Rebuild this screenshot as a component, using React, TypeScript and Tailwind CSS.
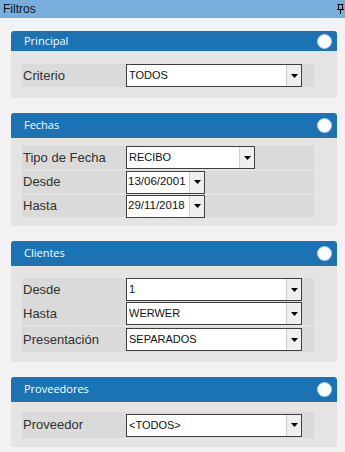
import React from 'react'

const label = "font-['Liberation_Sans',Arial,sans-serif] text-[13px] text-[#303030]"
const value = "font-['Liberation_Sans',Arial,sans-serif] text-[#111]"

function Combo({ text, width, big }: { text: string; width: string; big?: boolean }) {
    return (
        <div className={`flex h-[23px] bg-white border border-[#3f3f3f] ${width}`}>
            <div className={`flex-1 flex items-center overflow-hidden whitespace-nowrap ${value} ${big ? 'text-[11.5px] pl-[1px]' : 'text-[11px] pl-[2px]'}`}>{text}</div>
            <div className="w-[15px] flex items-center justify-center bg-[#efefef] border-l border-[#cfcfcf]">
                <svg width="7" height="4" viewBox="0 0 7 4">
                    <path d="M0 0h7L3.5 4z" fill="#000" />
                </svg>
            </div>
        </div>
    )
}

function Row({ name, text, width, h = 'h-[23px]', big }: { name: string; text: string; width: string; h?: string; big?: boolean }) {
    return (
        <div className={`flex items-center ${h}`}>
            <div className={`w-[104px] pl-[1px] ${label}`}>{name}</div>
            <Combo text={text} width={width} big={big} />
        </div>
    )
}

function Panel({ title, short, children, body }: { title: string; short?: boolean; children: React.ReactNode; body: string }) {
    return (
        <div className="flex flex-col">
            {/* header */}
            <div className={`flex items-center justify-between bg-[#1c73b4] rounded-t-[3px] pl-[13px] pr-[5px] ${short ? 'h-[20px]' : 'h-[25px]'}`}>
                <span className="font-['Open_Sans',sans-serif] text-[11px] text-white">{title}</span>
                <div className="w-[15px] h-[15px] rounded-full bg-white border border-[#b9c9d9]" />
            </div>
            <div className={`bg-[#e4e4e4] pl-[11px] pr-[23px] ${body}`}>{children}</div>
        </div>
    )
}

export default function App() {
    return (
        <div className="w-[345px] h-[452px] bg-[#f2f2f2] overflow-hidden flex flex-col">
            {/* Title bar */}
            <div className="h-[18px] bg-[#77aedc] flex items-center justify-between pl-[3px] pr-[1px]">
                <span className="font-['Liberation_Sans',Arial,sans-serif] text-[12px] text-[#111]">Filtros</span>
                <svg width="7" height="10" viewBox="0 0 7 10">
                    <path d="M0.5 0.5h6M1.5 0.5v5M5.5 0.5v5M0 5.5h7M3.5 5.5v4.5" stroke="#000" strokeWidth="1" fill="none" />
                </svg>
            </div>

            <div className="flex flex-col pl-[11px] pr-[8px] pt-[13px] gap-[15px]">
                <Panel title="Principal" short body="pt-[13px] pb-[11px]">
                    <div className="bg-[#dadada]">
                        <Row name="Criterio" text="TODOS" width="w-[176px]" />
                    </div>
                </Panel>

                <Panel title="Fechas" body="pt-[8px] pb-[9px] flex flex-col gap-[2px]">
                    <div className="bg-[#dadada]">
                        <Row name="Tipo de Fecha" text="RECIBO" width="w-[129px]" />
                    </div>
                    <div className="bg-[#dadada]">
                        <Row name="Desde" text="13/06/2001" width="w-[79px]" h="h-[22px]" big />
                    </div>
                    <div className="bg-[#dadada]">
                        <Row name="Hasta" text="29/11/2018" width="w-[79px]" h="h-[22px]" big />
                    </div>
                </Panel>

                <Panel title="Clientes" body="pt-[12px] pb-[10px] flex flex-col gap-[2px]">
                    <div className="bg-[#dadada] flex flex-col gap-[1px]">
                        <Row name="Desde" text="1" width="w-[176px]" />
                        <Row name="Hasta" text="WERWER" width="w-[176px]" />
                    </div>
                    <div className="bg-[#dadada]">
                        <Row name="Presentación" text="SEPARADOS" width="w-[176px]" h="h-[25px]" />
                    </div>
                </Panel>

                <Panel title="Proveedores" body="pt-[10px] pb-[9px]">
                    <div className="bg-[#dadada]">
                        <Row name="Proveedor" text="<TODOS>" width="w-[176px]" h="h-[26px]" />
                    </div>
                </Panel>
            </div>
        </div>
    )
}
